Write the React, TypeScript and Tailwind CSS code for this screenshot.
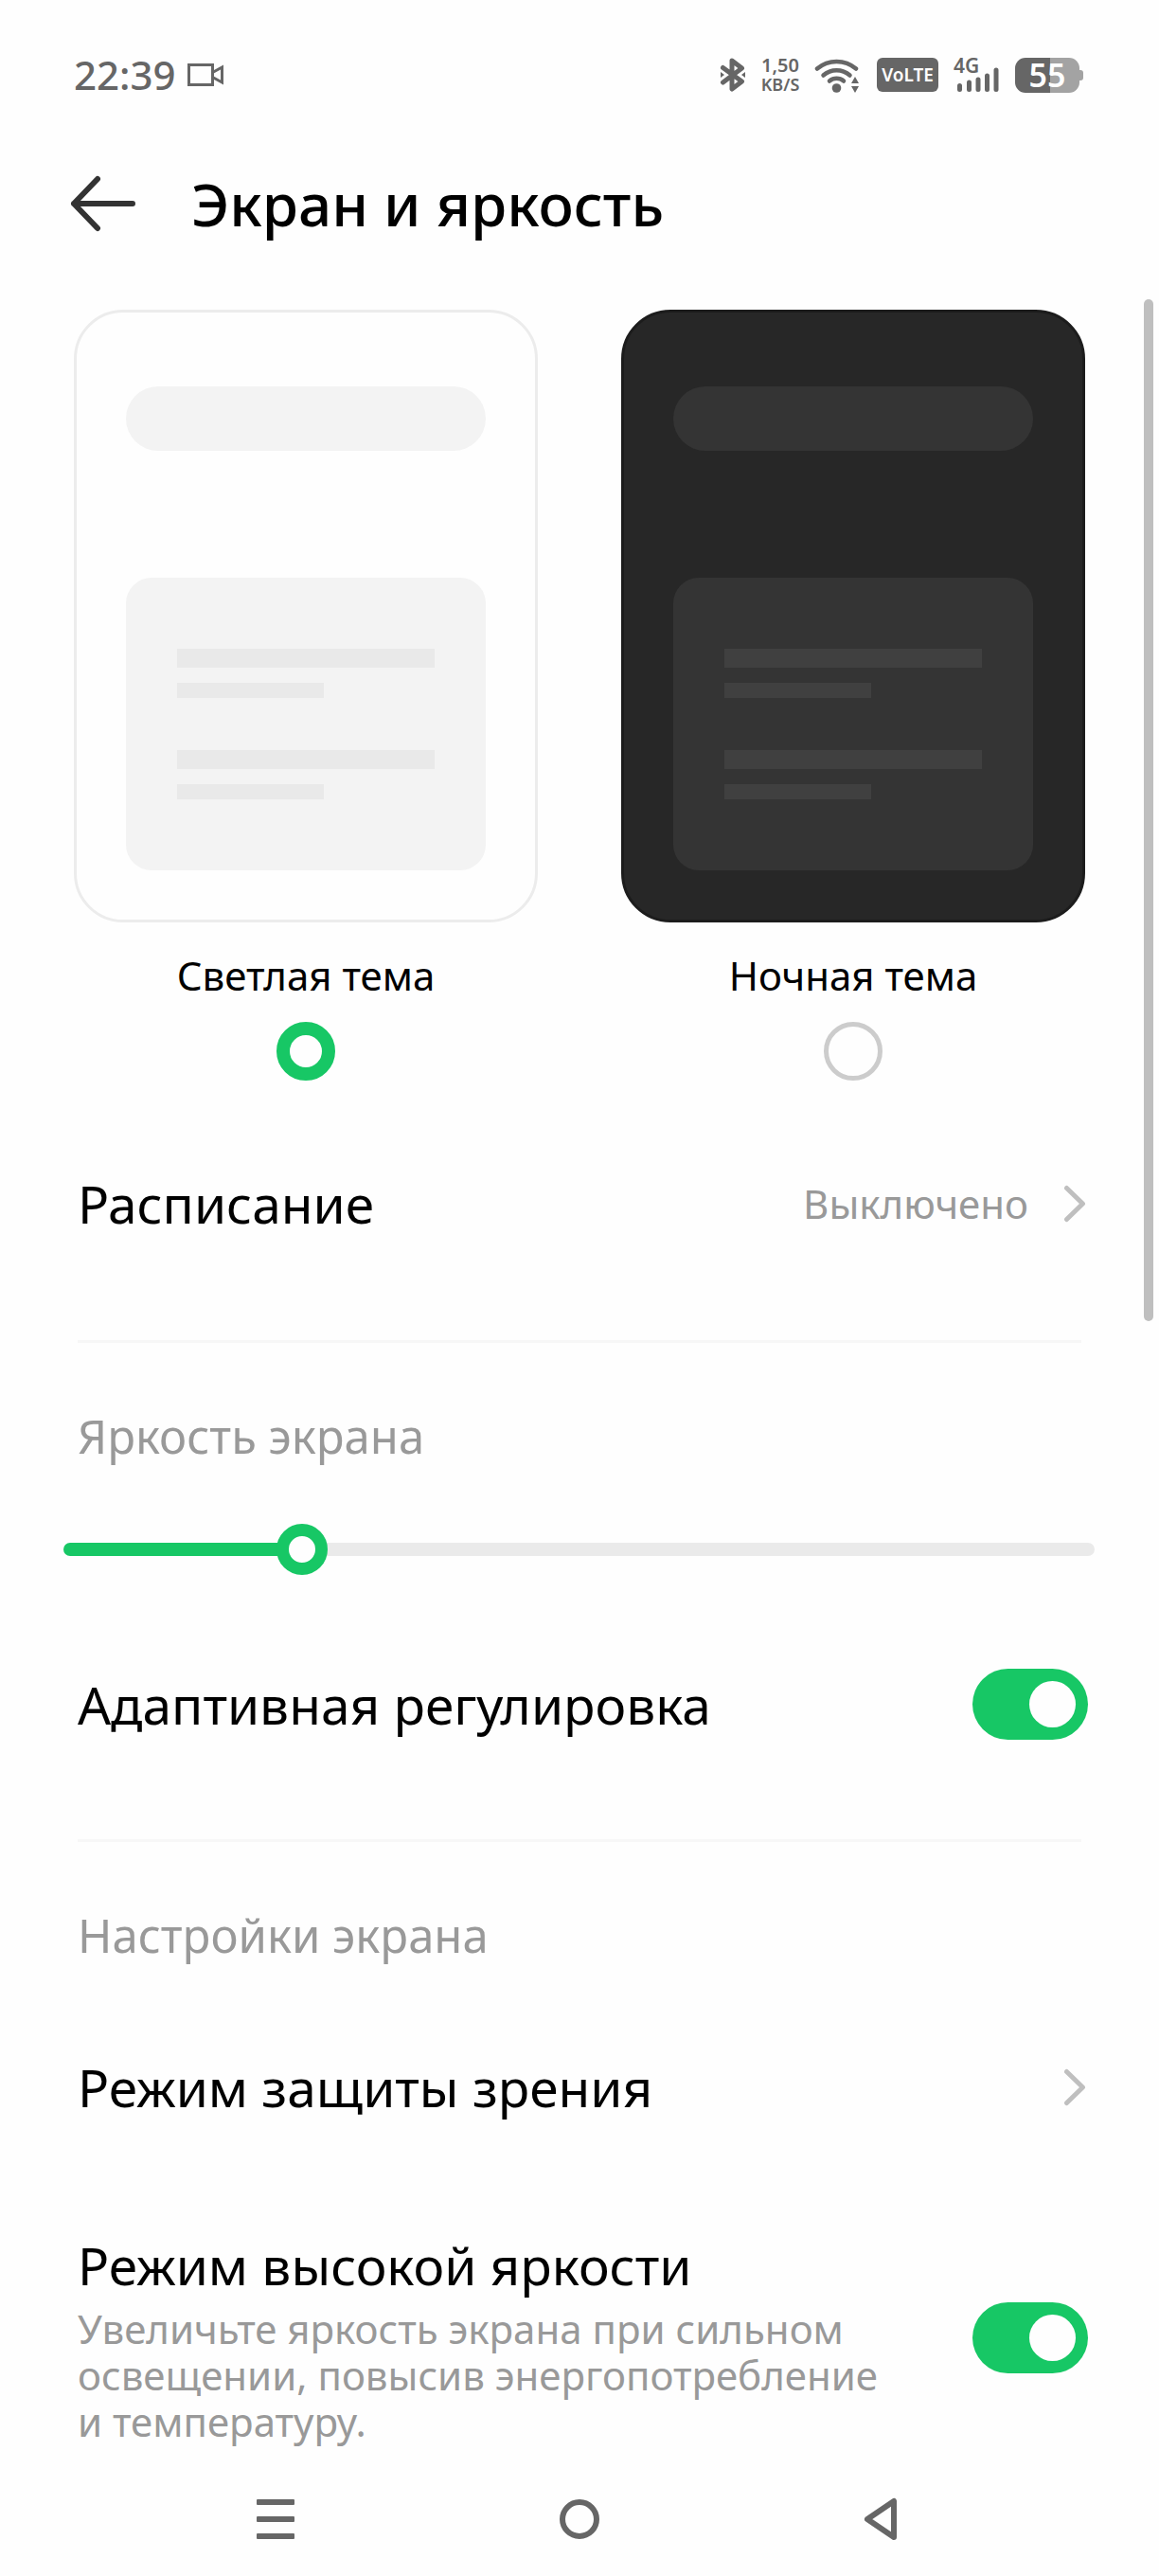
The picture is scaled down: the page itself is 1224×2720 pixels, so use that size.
import * as React from 'react'

function BluetoothIcon() {
  return (
    <svg width="28" height="38" viewBox="0 0 28 38" fill="none" stroke="#666666" strokeWidth="5" strokeLinejoin="round" strokeLinecap="round" aria-hidden="true">
      <path d="M3.5 11.5 23.5 26 13 34V4L23.5 12 3.5 27" />
      <path d="M1 16l4 3-4 3zM27 16l-4 3 4 3z" fill="#666666" stroke="none" />
    </svg>
  )
}

function WifiIcon() {
  return (
    <svg width="48" height="38" viewBox="0 0 48 38" fill="none" stroke="#666666" strokeWidth="4.5" strokeLinecap="round" aria-hidden="true">
      <path d="M3 12.5a31.5 31.5 0 0 1 41 0" />
      <path d="M9.5 19.5a21 21 0 0 1 28 0" />
      <path d="M16 25.5a11.5 11.5 0 0 1 15 0" />
      <circle cx="23.5" cy="33" r="4.8" fill="#666666" stroke="none" />
      <path d="M39 28h8l-4-7zM39 31h8l-4 7z" fill="#666666" stroke="none" />
    </svg>
  )
}

function StatusBar() {
  return (
    <div className="flex h-[158px] items-center justify-between pl-[78px] pr-[80px] font-semibold text-[#666666]">
      <div className="flex items-center gap-[12px]">
        <span className="text-[42px] font-medium leading-none">22:39</span>
        <svg width="38" height="26" viewBox="0 0 38 26" fill="none" stroke="#666666" strokeWidth="3" aria-hidden="true">
          <path d="M1.5 2.5h25v21h-25zM26.5 10.5 36.5 5v16l-10-5.5" />
        </svg>
      </div>
      <div className="flex items-center">
        <BluetoothIcon />
        <div className="ml-[14px] flex w-[44px] flex-col items-center whitespace-nowrap">
          <span className="text-[20px] leading-[20px]">1,50</span>
          <span className="text-[18px] leading-[20px]">KB/S</span>
        </div>
        <div className="ml-[14px]">
          <WifiIcon />
        </div>
        <span className="ml-[18px] flex h-[36px] w-[65px] items-center justify-center rounded-[6px] bg-[#666666] text-[19px] text-[#fefefe]">
          VoLTE
        </span>
        <div className="relative ml-[16px] h-[38px] w-[50px]">
          <span className="absolute left-0 top-0 text-[21px] leading-[18px]">4G</span>
          <svg className="h-full w-full" viewBox="0 0 50 38" stroke="#666666" strokeWidth="5" strokeLinecap="round" aria-hidden="true">
            <path d="M6.5 30.5v4M16.5 27v7.5M26 24v10.5M35.5 20v14.5M45 14v20.5" />
          </svg>
        </div>
        <div className="ml-[15px] flex items-center">
          <span className="flex h-[37px] w-[68px] items-center justify-center rounded-[11px] bg-[linear-gradient(90deg,#666666_55%,#a3a3a3_55%)] text-[34px] leading-none text-[#fefefe]">
            55
          </span>
          <span className="h-[11px] w-[4px] rounded-r-[3px] bg-[#a3a3a3]" />
        </div>
      </div>
    </div>
  )
}

const themes = [
  {
    id: 'light',
    label: 'Светлая тема',
    card: 'border-[#ececec] bg-[#fefefe]',
    block: 'bg-[#f3f3f3]',
    line: 'bg-[#e9e9e9]',
  },
  {
    id: 'dark',
    label: 'Ночная тема',
    card: 'border-[#1c1c1c] bg-[#272727]',
    block: 'bg-[#343434]',
    line: 'bg-[#404040]',
  },
]

function ThemePicker() {
  const [theme, setTheme] = React.useState('light')

  return (
    <div className="grid grid-cols-2 gap-[88px] px-[78px]">
      {themes.map((t) => (
        <label key={t.id} className="flex cursor-pointer flex-col items-center">
          <div className={`w-full rounded-[52px] border-[3px] px-[52px] pb-[52px] pt-[78px] ${t.card}`}>
            <div className={`h-[68px] rounded-full ${t.block}`} />
            <div className={`mt-[134px] rounded-[27px] px-[54px] pb-[75px] pt-[75px] ${t.block}`}>
              <div className={`h-[20px] ${t.line}`} />
              <div className={`mt-[16px] h-[16px] w-[57%] ${t.line}`} />
              <div className={`mt-[55px] h-[20px] ${t.line}`} />
              <div className={`mt-[16px] h-[16px] w-[57%] ${t.line}`} />
            </div>
          </div>
          <span className="mt-[28px] text-[42px] leading-[56px]">{t.label}</span>
          <input
            type="radio"
            name="theme"
            value={t.id}
            checked={theme === t.id}
            onChange={() => setTheme(t.id)}
            className="mt-[21px] size-[62px] appearance-none rounded-full border-[5px] border-[#cccccc] checked:border-[14px] checked:border-[#17c765]"
          />
        </label>
      ))}
    </div>
  )
}

function Chevron() {
  return (
    <svg width="24" height="40" viewBox="0 0 24 40" fill="none" stroke="#bfbfbf" strokeWidth="5" strokeLinecap="round" strokeLinejoin="round" aria-hidden="true">
      <path d="M3.5 3.5 20.5 20 3.5 36.5" />
    </svg>
  )
}

function LinkRow({ title, value }: { title: string; value?: string }) {
  return (
    <button type="button" className="flex w-full items-center pl-[82px] pr-[77px] text-left">
      <span className="flex-1 text-[55px] leading-[72px]">{title}</span>
      {value && <span className="mr-[37px] text-[42px] leading-[56px] text-[#999999]">{value}</span>}
      <Chevron />
    </button>
  )
}

function SwitchRow({ id, title, note }: { id: string; title: string; note?: string }) {
  const [on, setOn] = React.useState(true)

  return (
    <div className="flex items-center justify-between pl-[82px] pr-[75px]">
      <label htmlFor={id} className="max-w-[870px]">
        <span className="block text-[55px] leading-[72px]">{title}</span>
        {note && <span className="mt-[6px] block text-[42px] leading-[49px] text-[#999999]">{note}</span>}
      </label>
      <input
        id={id}
        type="checkbox"
        role="switch"
        checked={on}
        onChange={(e) => setOn(e.target.checked)}
        className="flex h-[75px] w-[122px] shrink-0 appearance-none items-center rounded-full bg-[#cccccc] px-[13px] before:size-[49px] before:rounded-full before:bg-[#fefefe] checked:justify-end checked:bg-[#17c765]"
      />
    </div>
  )
}

function BrightnessSlider() {
  const [value, setValue] = React.useState(217)
  const stop = `calc(27px + (100% - 54px) * ${value / 1000})`

  return (
    <div className="pl-[67px] pr-[68px]">
      <input
        type="range"
        aria-labelledby="brightness"
        min={0}
        max={1000}
        value={value}
        onChange={(e) => setValue(Number(e.target.value))}
        style={{ backgroundImage: `linear-gradient(90deg, #17c765 ${stop}, #eaeaea ${stop})` }}
        className="block h-[14px] w-full appearance-none rounded-full [&::-webkit-slider-thumb]:size-[54px] [&::-webkit-slider-thumb]:appearance-none [&::-webkit-slider-thumb]:rounded-full [&::-webkit-slider-thumb]:border-[13px] [&::-webkit-slider-thumb]:border-[#17c765] [&::-webkit-slider-thumb]:bg-[#fefefe]"
      />
    </div>
  )
}

function Divider() {
  return <hr className="mx-[82px] border-t-[3px] border-[#f7f7f7]" />
}

function NavBar() {
  return (
    <nav className="mt-auto flex h-[120px] items-center justify-between pl-[271px] pr-[276px]">
      <button type="button" aria-label="Недавние">
        <svg width="40" height="42" viewBox="0 0 40 42" fill="#666666">
          <rect width="40" height="6" rx="1" />
          <rect y="18" width="40" height="6" rx="1" />
          <rect y="36" width="40" height="6" rx="1" />
        </svg>
      </button>
      <button type="button" aria-label="Домой">
        <svg width="42" height="42" viewBox="0 0 42 42" fill="none" stroke="#666666" strokeWidth="6">
          <circle cx="21" cy="21" r="18" />
        </svg>
      </button>
      <button type="button" aria-label="Назад">
        <svg width="36" height="46" viewBox="0 0 36 46" fill="none" stroke="#666666" strokeWidth="6" strokeLinejoin="round">
          <path d="M32 4v38L4 23z" />
        </svg>
      </button>
    </nav>
  )
}

export default function App() {
  return (
    <div className="relative flex min-h-screen flex-col bg-[#fefefe] font-['Noto_Sans',sans-serif] text-black">
      <StatusBar />
      <header className="flex h-[114px] items-center pl-[74px]">
        <button type="button" aria-label="Назад">
          <svg width="70" height="60" viewBox="0 0 70 60" fill="none" stroke="#333333" strokeWidth="6" strokeLinecap="round" strokeLinejoin="round">
            <path d="M66 30H4M29 4 4 30l25 26" />
          </svg>
        </button>
        <h1 className="ml-[58px] text-[62px] font-medium leading-[80px]">Экран и яркость</h1>
      </header>
      <main className="pt-[55px]">
        <ThemePicker />
        <div className="mb-[108px] mt-[94px]">
          <LinkRow title="Расписание" value="Выключено" />
        </div>
        <Divider />
        <h2 id="brightness" className="mb-[81px] mt-[66px] pl-[82px] text-[49px] leading-[64px] text-[#999999]">
          Яркость экрана
        </h2>
        <BrightnessSlider />
        <div className="mb-[105px] mt-[119px]">
          <SwitchRow id="adaptive" title="Адаптивная регулировка" />
        </div>
        <Divider />
        <h2 className="mt-[66px] pl-[82px] text-[49px] leading-[64px] text-[#999999]">Настройки экрана</h2>
        <div className="mt-[93px]">
          <LinkRow title="Режим защиты зрения" />
        </div>
        <div className="mt-[116px]">
          <SwitchRow
            id="high-brightness"
            title="Режим высокой яркости"
            note="Увеличьте яркость экрана при сильном освещении, повысив энергопотребление и температуру."
          />
        </div>
      </main>
      <NavBar />
      {/* scroll indicator */}
      <div className="absolute right-[6px] top-[316px] h-[1079px] w-[10px] rounded-full bg-[#bfbfbf]" />
    </div>
  )
}
